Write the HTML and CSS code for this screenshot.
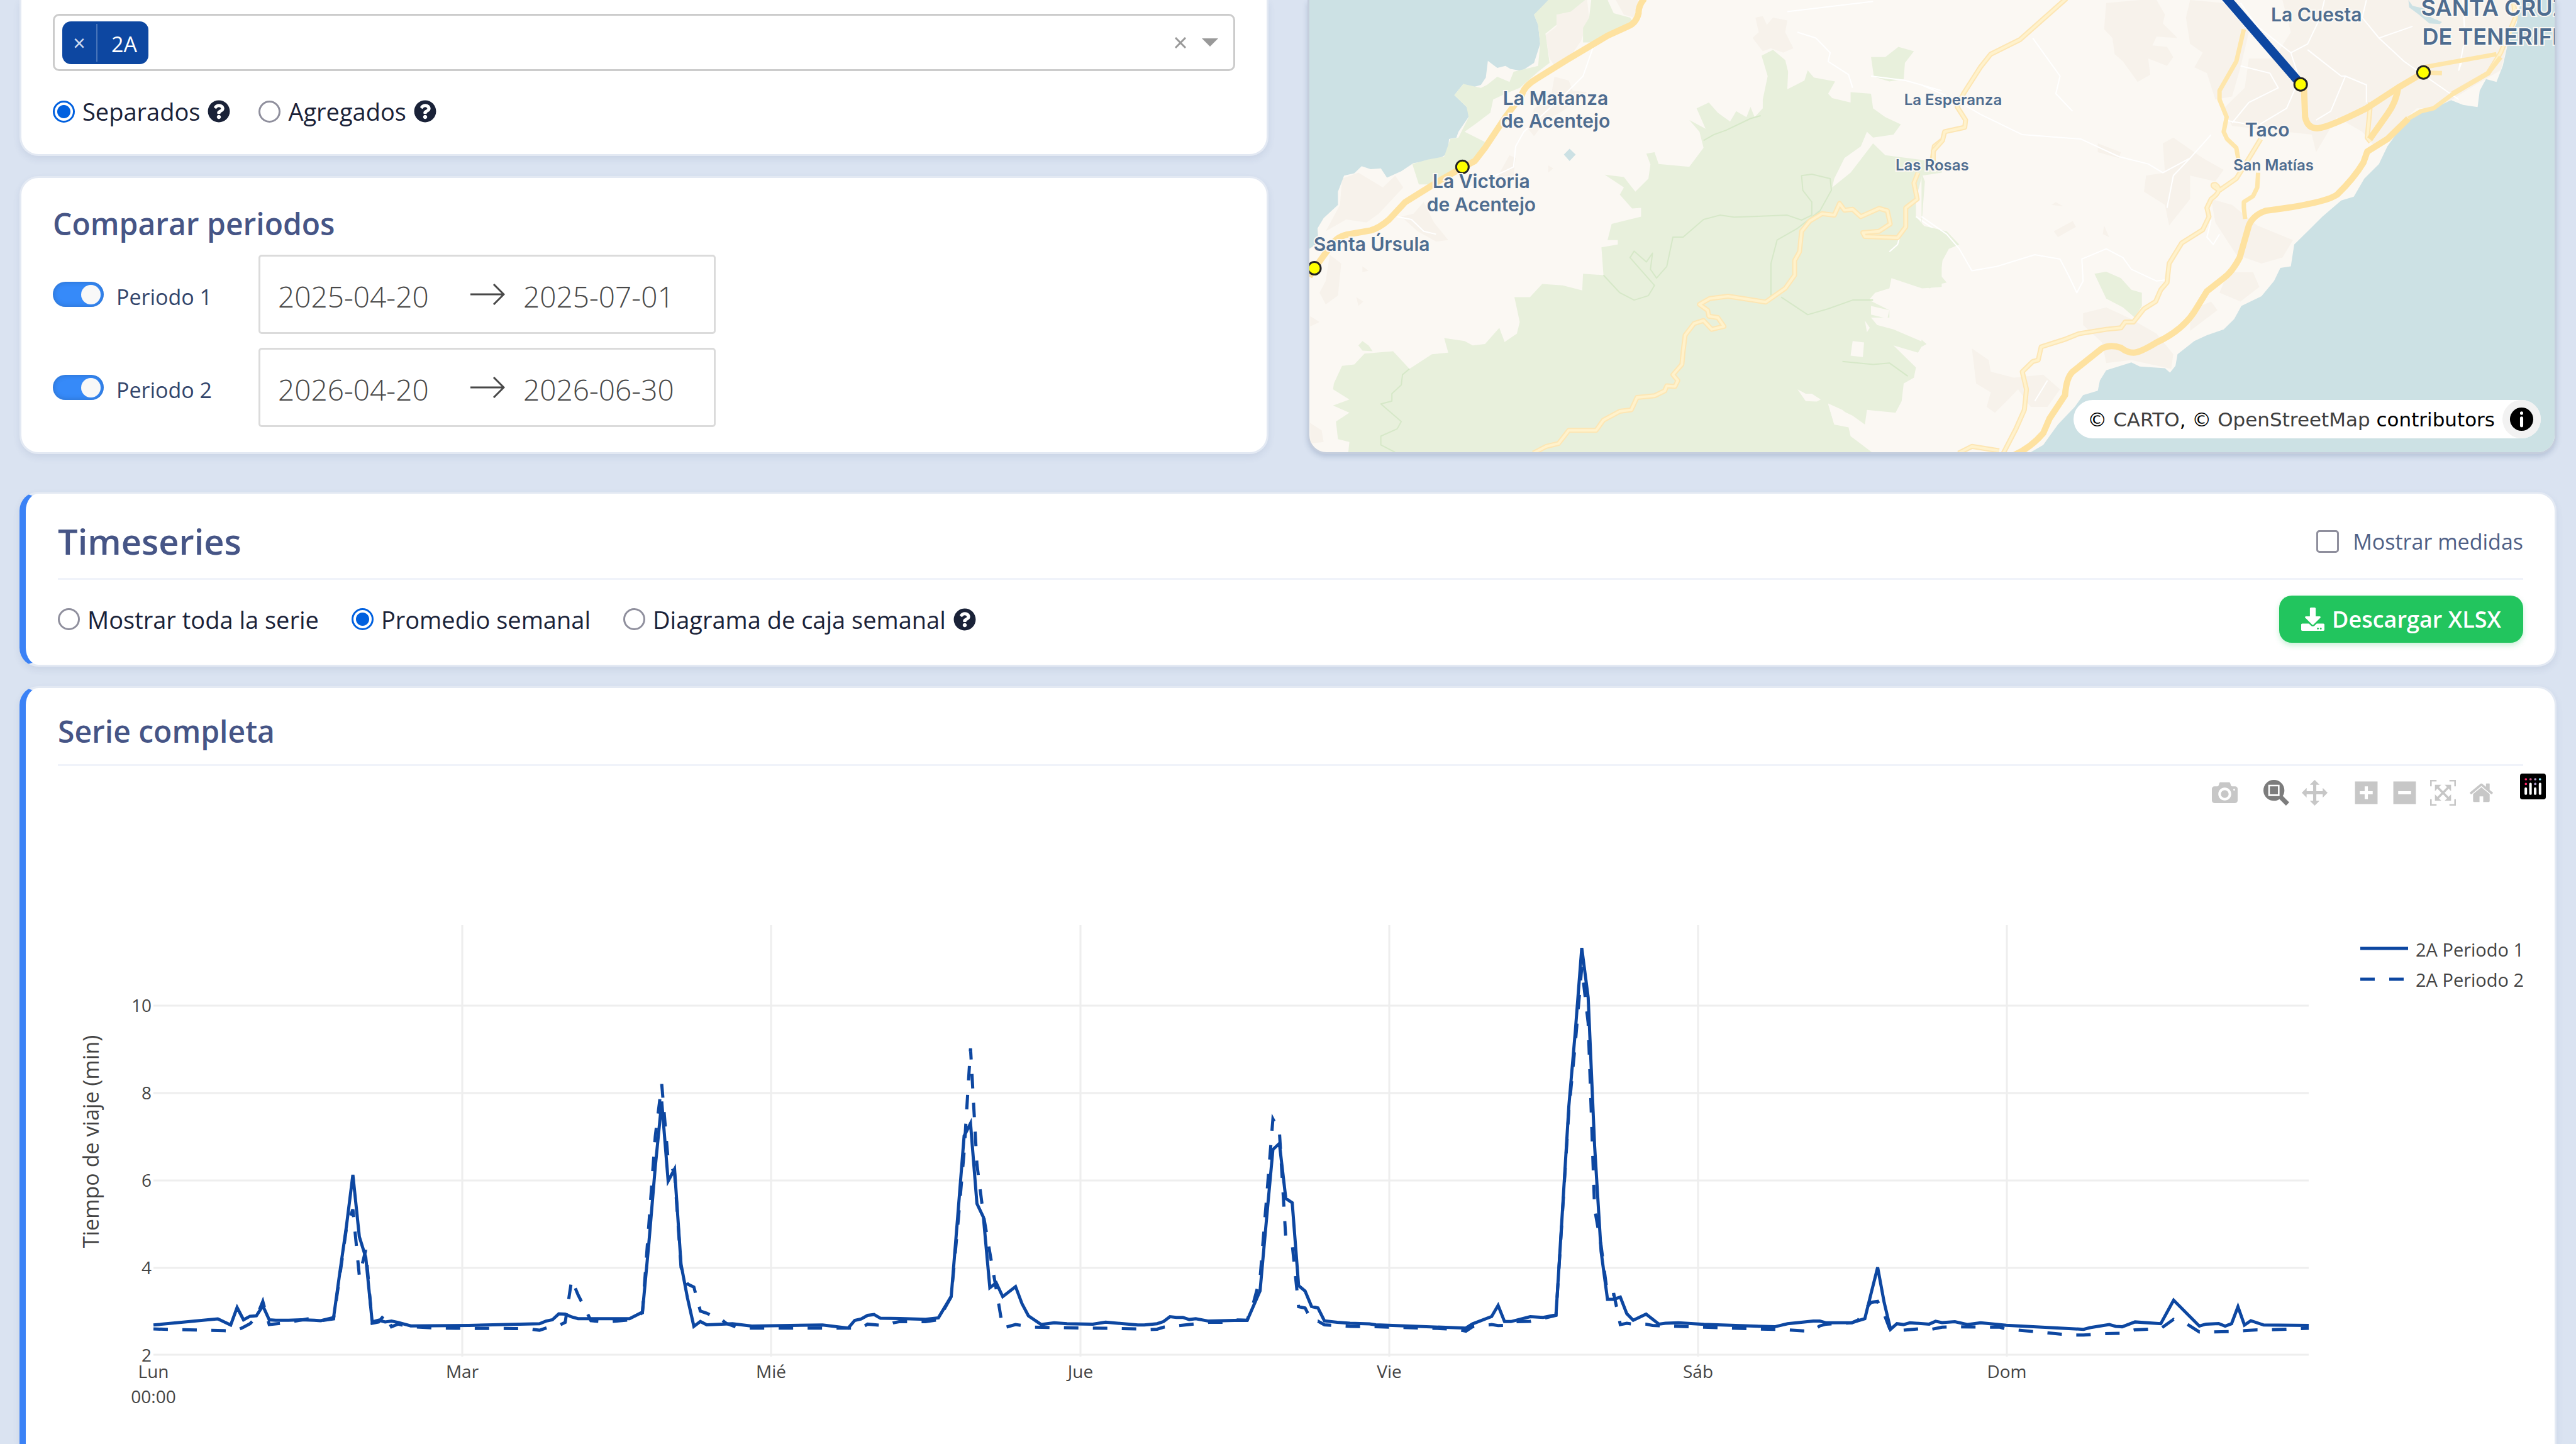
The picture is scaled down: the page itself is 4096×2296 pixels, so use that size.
FILE: index.html
```html
<!DOCTYPE html>
<html lang="es">
<head>
<meta charset="utf-8">
<title>Tiempos de viaje</title>
<link rel="stylesheet" href="styles.css">
</head>
<body>
<svg class="sprite" aria-hidden="true">
  <symbol id="help" viewBox="0 0 512 512"><path d="M504 256c0 137-111 248-248 248S8 393 8 256 119 8 256 8s248 111 248 248zM262.700 90c-54.500 0-89.300 23-116.500 63.800-3.500 5.300-2.400 12.400 2.700 16.300l34.700 26.300c5.200 3.900 12.600 3 16.700-2.100 17.900-22.700 30.100-35.800 57.300-35.800 20.400 0 45.700 13.100 45.700 33 0 15-12.400 22.700-32.500 34C247.100 238.500 216 255 216 296v4c0 6.600 5.400 12 12 12h56c6.600 0 12-5.400 12-12v-1.300c0-28.500 83.200-29.600 83.200-106.700 0-58-60.200-102-116.500-102zM256 338c-25.400 0-46 20.600-46 46s20.600 46 46 46 46-20.600 46-46-20.600-46-46-46z"/></symbol>
</svg>
<main class="page">
  <section class="top">
    <div class="filters">
      <div class="card card-routes">
        <div class="picker">
          <span class="tag"><button type="button" class="tag-remove" aria-label="Quitar 2A">×</button><span class="tag-name">2A</span></span>
          <input class="picker-input" type="text" role="combobox" aria-expanded="false" aria-label="Rutas">
          <button type="button" class="picker-btn" aria-label="Borrar todo"><svg class="picker-clear" viewBox="0 0 18 18"><path d="M1 1L17 17M17 1L1 17"/></svg></button>
          <button type="button" class="picker-btn" aria-label="Abrir lista"><svg class="picker-caret" viewBox="0 0 26 13"><path d="M0 0H26L13 13Z"/></svg></button>
        </div>
        <div class="options options-routes">
          <label class="option"><input class="radio" type="radio" name="modo" checked>Separados<svg class="help"><use href="#help"/></svg></label>
          <label class="option"><input class="radio" type="radio" name="modo">Agregados<svg class="help"><use href="#help"/></svg></label>
        </div>
      </div>
      <div class="card card-periods">
        <h2 class="title">Comparar periodos</h2>
        <div class="period">
          <label class="period-label"><input class="toggle" type="checkbox" checked><span class="period-name">Periodo 1</span></label>
          <div class="range">
            <input class="date" type="text" value="2025-04-20" aria-label="Inicio periodo 1">
            <svg class="arrow" viewBox="0 0 55 34"><path d="M0 17H53M37 1L53 17L37 33"/></svg>
            <input class="date date-end" type="text" value="2025-07-01" aria-label="Fin periodo 1">
          </div>
        </div>
        <div class="period">
          <label class="period-label"><input class="toggle" type="checkbox" checked><span class="period-name">Periodo 2</span></label>
          <div class="range">
            <input class="date" type="text" value="2026-04-20" aria-label="Inicio periodo 2">
            <svg class="arrow" viewBox="0 0 55 34"><path d="M0 17H53M37 1L53 17L37 33"/></svg>
            <input class="date date-end" type="text" value="2026-06-30" aria-label="Fin periodo 2">
          </div>
        </div>
      </div>
    </div>
    <div class="map">
      <svg class="map-canvas" viewBox="2081 0 1983 718" preserveAspectRatio="xMinYMin slice" role="img" aria-label="Mapa de Tenerife">
        <g transform="translate(2068 0) scale(.6486 .4648)">
          <path class="urban" d="M625 0L700 0L705 60L685 140L660 190L640 215L625 235L608 200L598 120L625 90ZM720 0L752 0L742 35ZM770 0L825 0L815 60L790 50ZM1112 60L1130 55L1140 85L1155 60L1190 70L1185 110L1205 165L1180 180L1150 165L1130 175L1105 130L1120 110ZM620 262L655 275L665 310L700 315L640 380L600 410L570 465L555 440L570 370L610 340ZM100 610L140 590L200 640L230 600L250 640L190 730L160 760L110 750L60 790L95 700ZM275 730L300 690L325 760L360 820L330 825L285 790L245 740ZM70 870L98 900L90 1010L60 1040L45 1000L60 960ZM150 910L165 925L150 930ZM510 530L525 540L520 600L480 605ZM605 565L617 575L605 590ZM135 1015L152 1030L140 1045ZM22 1080L45 1100L22 1115ZM22 1445L50 1470L55 1510L22 1515ZM1130 950L1150 965L1135 1010L1105 990Z"/>
          <path class="sea" d="M20 0H605L600 18L570 50L580 85L585 150L570 215L540 242L512 235L500 225L480 232L457 208L452 265L440 290L415 300L397 287L375 325L405 365L412 395L385 450L380 470L362 475L358 525L340 540L300 552L275 557L245 585L210 607L195 575L170 578L148 568L130 592L105 600L90 655L90 700L55 745L40 780L42 830L20 850ZM657 508L672 528L657 550L643 528Z"/>
          <path class="forest" d="M605 0H695L660 40L625 50V85L598 115L608 215L580 245L535 300L500 320L470 340L463 385L430 420L400 450L450 485L425 545L360 590L320 630H288L272 560L310 545L350 535L365 475L385 470L410 400L405 365L375 325L397 287L440 300L455 290L480 262L510 280L520 245L580 225L585 150L580 85L570 50ZM710 0H750L765 45L805 60L815 80L755 110L720 145H690L690 95L705 60Z"/>
          <path class="forest" d="M1127 190L1155 170L1185 205L1192 245L1190 305L1232 275L1240 240L1255 265L1307 278L1290 320L1300 335L1345 350V315L1395 320L1400 370L1430 400L1468 425L1450 460L1400 470L1385 450L1370 500L1330 540L1305 610L1300 640L1345 590L1400 490L1430 530L1568 555V590L1520 600L1505 680V740L1530 780L1568 800V980L1520 985L1445 950L1440 985L1405 1000L1390 1025L1440 1060V1085L1395 1085L1410 1110L1450 1125L1525 1170L1510 1205L1450 1180L1505 1255L1500 1290L1475 1310L1470 1370L1455 1410L1385 1400L1380 1450L1350 1420L1290 1380L1305 1450L1340 1460L1345 1490L1400 1548H115L118 1510L90 1500L85 1440L118 1410L78 1385L118 1365L78 1330L80 1310L100 1250L130 1245L155 1208L225 1200L265 1260L320 1210L360 1205L350 1155L400 1165L420 1180L450 1175L485 1120L498 1168L528 1140L535 1100L522 1015L560 1015L590 970L640 975L688 992L690 935L740 940L735 845L775 835V820L750 820L760 765L832 740V710L810 712L780 665L790 640L743 597L790 605L818 655L850 610L855 562L845 525L865 520L875 560L950 570L985 505L975 450L950 410L990 440L968 370L998 350L1020 385L1050 415L1065 380L1090 400L1100 365L1110 400L1130 370V340L1142 260Z"/>
          <path class="forest" d="M1395 195L1430 195L1462 160L1500 175L1478 215L1475 270L1440 278L1402 262ZM140 1180L150 1165L165 1180L175 1200L150 1198Z"/>
          <path class="land" d="M1215 1330L1235 1345L1250 1345L1272 1365L1262 1372L1235 1370ZM1290 1378L1325 1400L1350 1430L1385 1470L1370 1452L1345 1455L1305 1450ZM1395 1045L1440 1060L1435 1088L1395 1075ZM1380 1095L1392 1120L1385 1135ZM1350 1165L1378 1170L1375 1220L1345 1215Z"/>
          <path class="trail" d="M985 480L1010 460L1040 445L1100 405L1125 395M740 940L780 1000L815 1025L850 1010L865 975L805 880L815 858L845 895L860 865L855 920L870 950L895 910L910 810L935 810L985 750L1025 735L1060 742L1190 735L1225 752L1250 735V690L1228 650L1225 600L1250 595L1295 610L1298 650L1270 720L1215 780L1165 820L1150 900V1010M1175 1015L1240 1075L1290 1055L1350 1025L1400 1025M265 1260L248 1280L245 1315L222 1345V1370L195 1380L245 1440L235 1465L195 1490L195 1520L230 1545M1325 1235L1400 1245L1440 1240L1485 1285"/>
          <path class="lane" d="M715 160L690 260L640 330L545 450L525 500L520 570L400 650M1190 40L1400 5M1215 110L1260 130L1295 180L1290 210L1340 255L1350 300M1395 260L1480 275L1568 310M1505 740L1568 800M1465 810L1460 835L1440 860M235 740L270 750L300 790L330 800"/>
          <path class="minor-edge" d="M568 1548L600 1525L630 1515L655 1470H722L740 1435L780 1405L808 1400L822 1358L865 1352L890 1335L895 1318L915 1320L922 1300L910 1280L932 1245L935 1200L940 1145L962 1105L985 1095L1005 1125L1035 1115L1020 1085L998 1080L995 1060L975 1040L1000 1020L1045 1012L1137 1032L1185 985L1208 940V890L1220 860L1225 790L1245 755L1275 730L1305 735L1318 695L1330 718L1350 715L1370 740L1415 712L1435 720L1442 765L1415 790L1375 795L1380 808L1460 812L1480 775V710L1508 680L1500 625L1510 590M1545 545L1550 500L1568 480"/>
          <path class="minor" d="M568 1548L600 1525L630 1515L655 1470H722L740 1435L780 1405L808 1400L822 1358L865 1352L890 1335L895 1318L915 1320L922 1300L910 1280L932 1245L935 1200L940 1145L962 1105L985 1095L1005 1125L1035 1115L1020 1085L998 1080L995 1060L975 1040L1000 1020L1045 1012L1137 1032L1185 985L1208 940V890L1220 860L1225 790L1245 755L1275 730L1305 735L1318 695L1330 718L1350 715L1370 740L1415 712L1435 720L1442 765L1415 790L1375 795L1380 808L1460 812L1480 775V710L1508 680L1500 625L1510 590M1545 545L1550 500L1568 480"/>
          <path class="major" d="M840 -5Q825 20 826 45Q820 80 800 90L750 122L650 205L575 270Q545 295 540 325L500 400L450 505L425 550L395 572L345 612L255 690L215 750Q190 780 170 787L110 802Q85 810 70 845L33 916L20 945"/>
        </g>
        <g transform="translate(3053 0) scale(.6664 .4648)">
          <path class="urban" d="M440 10L520 0H560L580 50L575 80L610 130L560 125L550 155L585 160L600 195L585 225L540 200L545 255L515 280L500 250L480 210L460 185L455 130L435 100ZM640 0L720 10L780 110L760 230L740 330L700 340L680 250L650 230L670 180L640 150L630 60ZM860 0H1420L1400 130L1380 240L1320 290L1230 370L1180 370L1080 500L1050 450L990 400L940 520L930 460L800 440L740 430L720 370L770 300L780 200L840 200L880 110ZM575 490L600 470L670 540L720 580L700 620L640 600L640 680L590 770L580 700L530 655L535 600L580 590ZM690 680L740 700L800 770L885 820L860 880L810 900L750 870L700 760ZM730 930L790 930L805 980L760 1030L710 1000ZM385 1070L440 1050L500 1090L560 1140L600 1210L595 1260L500 1230L440 1240L430 1170L385 1110ZM120 1190L160 1230L165 1270L220 1290L290 1280L330 1330L300 1390L260 1390L230 1330L210 1360L175 1410L155 1390L165 1340L130 1310ZM315 790L360 755L368 775L325 810ZM435 770L447 810L432 800ZM640 1060L690 1030L705 1060L640 1130ZM320 690L338 705L310 700ZM420 490L475 520L470 540L420 520Z"/>
          <path class="forest" d="M0 590L8 620L0 770L30 780L60 790L90 835L65 850L50 890L45 940L60 965L30 975L20 985L0 975ZM412 935L440 928L475 950L500 990L525 1000V1045L508 1085L480 1050L440 1020ZM0 1160L12 1175L0 1185Z"/>
          <path class="sea" d="M1428 0H1530V1560H242L290 1520L305 1490L325 1450L365 1390L385 1350L420 1335L425 1300L440 1265L500 1238L520 1252L580 1258L592 1273L605 1250L610 1210L650 1165L680 1145L720 1125L745 1090L762 1045L810 1012L840 960L855 915L880 910L888 835L920 790L955 740L1000 685L1030 672L1055 610L1090 560L1110 500L1150 420L1180 380L1220 370L1262 342L1290 358L1325 366L1330 310L1345 270L1370 280L1385 225L1400 130L1418 80ZM1160 0L1162 25L1185 50L1210 80L1235 82L1240 75L1215 60L1200 30L1170 20Z"/>
          <path class="lane" d="M265 130L300 200L330 260L320 320L360 380M0 290L80 340L140 390L240 460L380 475L470 535L540 560L575 590L640 540L690 460M0 740L60 800L90 850L120 925L180 910L270 870L330 885L350 940L370 1000L385 960L382 885L440 850L480 880L500 920L560 960L590 955M760 10L800 90L880 180L920 150L950 60L960 0M880 180L900 270L870 370L800 430L720 410M760 225L830 250L850 300L780 350L740 420M920 170L1000 260L1010 260L975 380L940 410M1010 260L1060 290L1060 350M1060 0L1050 60L1090 130L1150 210L1280 340M1090 130L1170 90M1290 0L1295 130L1280 240L1290 200M640 540L600 600L585 710M690 750L680 810L695 835L710 800M270 1370L300 1300"/>
          <path class="minor-edge" d="M345 -5L235 135L165 185L140 230L100 320L85 365L105 410L103 435L55 450L50 480L28 515V550M808 475L770 565L750 610L710 650Q685 630 700 630Q720 650 690 680L680 710L685 740L670 785L620 830L590 900L585 965L570 990L558 1030L530 1055L505 1100H485L475 1120L440 1125L375 1140L340 1160L285 1185L278 1230L265 1235L240 1270L250 1330L245 1400L225 1465L195 1548M88 1548L120 1525L185 1540M1410 0L1415 60L1380 180L1350 250L1265 320M1070 350L1062 470L1070 485"/>
          <path class="minor" d="M345 -5L235 135L165 185L140 230L100 320L85 365L105 410L103 435L55 450L50 480L28 515V550M808 475L770 565L750 610L710 650Q685 630 700 630Q720 650 690 680L680 710L685 740L670 785L620 830L590 900L585 965L570 990L558 1030L530 1055L505 1100H485L475 1120L440 1125L375 1140L340 1160L285 1185L278 1230L265 1235L240 1270L250 1330L245 1400L225 1465L195 1548M88 1548L120 1525L185 1540M1410 0L1415 60L1380 180L1350 250L1265 320M1070 350L1062 470L1070 485"/>
          <path class="medium" d="M768 100L750 210L710 310V340L727 400L720 450L728 475L750 505L755 545M802 590L800 640L790 670L768 690V710L771 748M1240 250L1196 248M1196 230L1370 185M1380 195L1350 250L1262 325L1220 370L1190 380L1160 405"/>
          <path class="major" d="M911 290L914 400Q920 440 945 438Q970 435 1060 370L1135 300L1196 248M1135 305Q1130 350 1110 390L1068 475M1160 405L1110 475L1062 518L1053 555Q1030 610 990 665Q960 695 820 720Q790 735 780 770L758 880Q740 930 720 950L680 995L650 1065Q620 1130 560 1170Q520 1205 505 1205Q490 1205 475 1188Q450 1175 430 1190L360 1270Q345 1290 342 1350L305 1430L290 1480Q260 1530 220 1555"/>
          <path class="route" d="M712 -30L904 288"/>
        </g>
        <g class="stops">
          <circle cx="2324" cy="265" r="10"/><circle cx="2089" cy="426" r="10"/>
          <circle cx="3655" cy="134" r="10"/><circle cx="3850" cy="115" r="10"/>
        </g>
        <g class="towns">
          <text x="2472" y="167">La Matanza</text><text x="2472" y="203">de Acentejo</text>
          <text x="2354" y="299">La Victoria</text><text x="2354" y="336">de Acentejo</text>
          <text x="2180" y="398">Santa Úrsula</text>
          <text x="3680" y="34">La Cuesta</text><text x="3602" y="217">Taco</text>
          <g class="hamlets"><text x="3103" y="167">La Esperanza</text><text x="3070" y="271">Las Rosas</text><text x="3612" y="271">San Matías</text></g>
          <g class="city"><text x="3846" y="25">SANTA CRUZ</text><text x="3848" y="71">DE TENERIFE</text></g>
        </g>
      </svg>
      <div class="credits">
        <span>© <a href="#carto">CARTO</a>, © <a href="#osm">OpenStreetMap</a> contributors</span>
        <button type="button" class="credits-btn" aria-label="Información"><svg viewBox="0 0 24 24"><circle cx="12" cy="12" r="7.300"/><path class="info-i" d="M12 11.300V16M12 8.200V8.300"/></svg></button>
      </div>
    </div>
  </section>

  <section class="card card-accent">
    <header class="card-head">
      <h1 class="title title-big">Timeseries</h1>
      <label class="measures"><input class="check" type="checkbox">Mostrar medidas</label>
    </header>
    <div class="controls">
      <div class="options">
        <label class="option"><input class="radio" type="radio" name="serie">Mostrar toda la serie</label>
        <label class="option"><input class="radio" type="radio" name="serie" checked>Promedio semanal</label>
        <label class="option"><input class="radio" type="radio" name="serie">Diagrama de caja semanal<svg class="help"><use href="#help"/></svg></label>
      </div>
      <button type="button" class="download"><svg class="download-icon" viewBox="0 0 512 512"><path d="M216 0h80c13.300 0 24 10.700 24 24v168h87.700c17.800 0 26.700 21.500 14.100 34.100L269.700 378.300c-7.500 7.500-19.800 7.500-27.300 0L90.100 226.100c-12.600-12.600-3.700-34.100 14.100-34.100H192V24c0-13.300 10.700-24 24-24zm296 376v112c0 13.300-10.700 24-24 24H24c-13.300 0-24-10.700-24-24V376c0-13.300 10.700-24 24-24h146.700l49 49c20.100 20.100 52.500 20.100 72.600 0l49-49H488c13.300 0 24 10.700 24 24zm-124 88c0-11-9-20-20-20s-20 9-20 20 9 20 20 20 20-9 20-20zm64 0c0-11-9-20-20-20s-20 9-20 20 9 20 20 20 20-9 20-20z"/></svg>Descargar XLSX</button>
    </div>
  </section>

  <section class="card card-accent card-chart">
    <header class="card-head"><h2 class="title">Serie completa</h2></header>
    <div class="modebar">
      <button type="button" class="mode" aria-label="Descargar imagen"><svg viewBox="0 0 1000 1000"><path transform="matrix(1 0 0 -1 0 850)" d="m500 450c-83 0-150-67-150-150 0-83 67-150 150-150 83 0 150 67 150 150 0 83-67 150-150 150z m400 150h-120c-16 0-34 13-39 29l-31 93c-6 15-23 28-40 28h-340c-16 0-34-13-39-28l-31-94c-6-15-23-28-40-28h-120c-55 0-100-45-100-100v-450c0-55 45-100 100-100h800c55 0 100 45 100 100v450c0 55-45 100-100 100z m-400-550c-138 0-250 112-250 250 0 138 112 250 250 250 138 0 250-112 250-250 0-138-112-250-250-250z m365 380c-19 0-35 16-35 35 0 19 16 35 35 35 19 0 35-16 35-35 0-19-16-35-35-35z"/></svg></button>
      <div class="mode-group">
        <button type="button" class="mode mode-on" aria-label="Zoom"><svg viewBox="0 0 1000 1000"><path transform="matrix(1 0 0 -1 0 850)" d="m1000-25l-250 251c40 63 63 138 63 218 0 224-182 406-407 406-224 0-406-182-406-406s183-406 407-406c80 0 155 22 218 62l250-250 125 125z m-812 250l0 438 437 0 0-438-437 0z m62 375l313 0 0-312-313 0 0 312z"/></svg></button>
        <button type="button" class="mode" aria-label="Desplazar"><svg viewBox="0 0 1000 1000"><path transform="matrix(1 0 0 -1 0 850)" d="m1000 350l-187 188 0-125-250 0 0 250 125 0-188 187-187-187 125 0 0-250-250 0 0 125-188-188 186-187 0 125 252 0 0-250-125 0 187-188 188 188-125 0 0 250 250 0 0-126 187 188z"/></svg></button>
      </div>
      <div class="mode-group">
        <button type="button" class="mode" aria-label="Acercar"><svg viewBox="-62 0 1000 1000"><path transform="matrix(1 0 0 -1 0 850)" d="m1 787l0-875 875 0 0 875-875 0z m687-500l-187 0 0-187-125 0 0 187-188 0 0 125 188 0 0 187 125 0 0-187 187 0 0-125z"/></svg></button>
        <button type="button" class="mode" aria-label="Alejar"><svg viewBox="-62 0 1000 1000"><path transform="matrix(1 0 0 -1 0 850)" d="m0 788l0-876 875 0 0 876-875 0z m688-500l-500 0 0 125 500 0 0-125z"/></svg></button>
        <button type="button" class="mode" aria-label="Autoescala"><svg viewBox="0 0 1000 1000"><path transform="matrix(1 0 0 -1 0 850)" d="m250 850l-187 0-63 0 0-62 0-188 63 0 0 188 187 0 0 62z m688 0l-188 0 0-62 188 0 0-188 62 0 0 188 0 62-62 0z m-875-938l0 188-63 0 0-188 0-62 63 0 187 0 0 62-187 0z m875 188l0-188-188 0 0-62 188 0 62 0 0 62 0 188-62 0z m-125 188l-1 0-93-94-156 156 156 156 92-93 2 0 0 250-250 0 0-2 93-92-156-156-156 156 94 92 0 2-250 0 0-250 0 0 93 93 157-156-157-156-93 94 0 0 0-250 250 0 0 0-94 93 156 157 156-157-93-93 0 0 250 0 0 250z"/></svg></button>
        <button type="button" class="mode" aria-label="Restablecer"><svg viewBox="-36 0 1000 1000"><path transform="matrix(1 0 0 -1 0 850)" d="m786 296v-267q0-15-11-26t-25-10h-214v214h-143v-214h-214q-15 0-25 10t-11 26v267q0 1 0 2t0 2l321 264 321-264q1-1 1-4z m124 39l-34-41q-5-5-12-6h-2q-7 0-12 3l-386 322-386-322q-7-4-13-4-7 2-12 7l-35 41q-4 5-3 13t6 12l401 334q18 15 42 15t43-15l136-114v109q0 8 5 13t13 5h107q8 0 13-5t5-13v-227l122-102q5-5 6-12t-4-13z"/></svg></button>
      </div>
      <a class="mode mode-logo" href="#plotly" aria-label="Plotly"><svg viewBox="0 0 132 132"><rect width="132" height="132" rx="12"/><g fill="#fff"><rect x="23" y="71" width="13" height="38" rx="6"/><rect x="47" y="47" width="13" height="62" rx="6"/><rect x="71" y="71" width="13" height="38" rx="6"/><rect x="96" y="47" width="13" height="62" rx="6"/></g><g fill="#f26"><circle cx="30" cy="29" r="6"/><circle cx="30" cy="53" r="6"/></g><circle cx="54" cy="29" r="6" fill="#d25a8c"/><g fill="#b4a0d2"><circle cx="78" cy="29" r="6"/><circle cx="78" cy="53" r="6"/></g><circle cx="102" cy="29" r="6" fill="#8cf0ff"/></svg></a>
    </div>
    <svg class="chart" viewBox="92 1282 3920 1000" role="img" aria-label="Tiempo de viaje en minutos">
      <path class="grid" d="M244 1600H3671M244 1739H3671M244 1878H3671M244 2017H3671M244 2155H3671M735 1472V2158M1226 1472V2158M1718 1472V2158M2209 1472V2158M2700 1472V2158M3191 1472V2158"/>
      <path class="series" id="p1"/>
      <path class="series dashed" id="p2"/>
      <g class="tick tick-y"><text x="241" y="1610">10</text><text x="241" y="1749">8</text><text x="241" y="1888">6</text><text x="241" y="2027">4</text><text x="241" y="2166">2</text></g>
      <g class="tick tick-x"><text x="244" y="2192">Lun</text><text x="244" y="2232">00:00</text><text x="735" y="2192">Mar</text><text x="1226" y="2192">Mié</text><text x="1718" y="2192">Jue</text><text x="2209" y="2192">Vie</text><text x="2700" y="2192">Sáb</text><text x="3191" y="2192">Dom</text></g>
      <text class="axis-title" transform="translate(157 1816) rotate(-90)">Tiempo de viaje (min)</text>
      <path class="series" d="M3753 1509H3829"/><path class="series dashed" d="M3753 1558H3829"/>
      <g class="tick legend"><text x="3841" y="1522">2A Periodo 1</text><text x="3841" y="1570">2A Periodo 2</text></g>
    </svg>
  </section>
</main>
<script src="chart.js"></script>
</body>
</html>
```
FILE: styles.css
```css
* { box-sizing: border-box; }
body { margin: 0; background: #dae3f1; color: #1a2238; font-family: "Open Sans", "Noto Sans", sans-serif; font-size: 38px; line-height: 60px; }
button, input { font: inherit; color: inherit; margin: 0; padding: 0; border: 0; background: none; outline: 0; }
svg { display: block; }
.sprite { position: absolute; width: 0; height: 0; }
.page { display: flex; flex-direction: column; min-height: 100vh; padding: 0 31px; }
.top { display: grid; grid-template-columns: 1fr 1fr; gap: 62px; margin-bottom: 60px; }
.filters { display: flex; flex-direction: column; gap: 32px; }

.card { background: #fff; border: 3px solid #e3e9f3; border-radius: 30px; box-shadow: 0 5px 12px rgba(40, 70, 120, .09); }
.card-routes { padding: 22px 50px 38px; border-top: 0; border-radius: 0 0 30px 30px; }
.card-periods { padding: 43px 50px 40px; }
.card-accent { border-left: 10px solid #3b82f6; padding: 39px 50px 35px 51px; }
.card-chart { flex: 1; margin-top: 31px; padding-bottom: 0; border-bottom: 0; border-radius: 30px 30px 0 0; }
.title { margin: 0; color: #465586; font-size: 48px; font-weight: 600; line-height: 60px; }
.title-big { font-size: 56px; line-height: 73px; }
.card-head { display: flex; justify-content: space-between; align-items: center; padding-bottom: 22px; border-bottom: 3px solid #f0f3fa; }

.picker { display: flex; align-items: center; height: 91px; padding: 0 24px 0 12px; border: 3px solid #ccc; border-radius: 10px; }
.tag { display: flex; align-items: center; width: 137px; height: 68px; border-radius: 14px; background: #0d47a1; color: #fff; font-size: 34px; }
.tag-remove { width: 56px; height: 60px; border-right: 2px solid #4a76ba; color: #cfdcf0; line-height: 60px; }
.tag-name { flex: 1; padding: 4px 0 0 4px; text-align: center; }
.picker-input { flex: 1; min-width: 0; }
.picker-btn { margin-left: 25px; }
.picker-clear { width: 18px; height: 18px; fill: none; stroke: #999; stroke-width: 3; }
.picker-caret { width: 26px; height: 13px; fill: #999; }

.options { display: flex; gap: 52px; }
.options-routes { gap: 45px; margin-top: 34px; }
.option { display: flex; align-items: center; gap: 12px; }
.radio { appearance: none; width: 35px; height: 35px; border: 3px solid #8f8f9d; border-radius: 50%; background: #fff; }
.radio:checked { border-color: #0060df; background: radial-gradient(circle, #0060df 10px, #fff 11px); }
.help { width: 36px; height: 36px; fill: #1a2238; }

.period { display: flex; align-items: center; margin-top: 22px; }
.title + .period { margin-top: 19px; }
.period-label { display: flex; align-items: center; gap: 20px; width: 327px; color: #33456b; font-size: 34px; }
.period-name { padding-top: 8px; }
.toggle { appearance: none; display: flex; align-items: center; justify-content: flex-end; width: 81px; height: 40px; padding-right: 5px; border-radius: 20px; background: #368af9; box-shadow: inset 0 0 10px rgba(0, 0, 0, .2); }
.toggle::before { content: ""; width: 31px; height: 31px; border-radius: 50%; background: #f8f8f8; }
.range { display: flex; align-items: center; width: 727px; height: 126px; padding-left: 28px; border: 3px solid #dbdbdb; border-radius: 5px; background: #fff; }
.date { width: 306px; padding-top: 6px; color: #484848; font-size: 46px; font-weight: 300; }
.date-end { width: 270px; margin-left: 29px; }
.arrow { width: 55px; height: 34px; fill: none; stroke: #484848; stroke-width: 3; }

.map { position: relative; overflow: hidden; border: 3px solid #c5cedd; border-top: 0; border-radius: 0 0 30px 30px; background: #fbf8f3; box-shadow: 0 4px 8px rgba(40, 70, 120, .2); }
.map-canvas { position: absolute; inset: 0; width: 100%; height: 100%; }
.map-canvas path { vector-effect: non-scaling-stroke; stroke-linejoin: round; }
.land { fill: #fbf8f3; }
.sea { fill: #cce1e4; }
.forest { fill: #e8f0dc; }
.urban { fill: #f7f2eb; }
.trail { fill: none; stroke: #d6e8c8; stroke-width: 2; }
.lane { fill: none; stroke: #fff; stroke-width: 2; }
.minor-edge { fill: none; stroke: #fde6b4; stroke-width: 8; }
.minor { fill: none; stroke: #fff2cc; stroke-width: 4; }
.medium { fill: none; stroke: #fee6ab; stroke-width: 7; }
.major { fill: none; stroke: #fee2a0; stroke-width: 10; }
.route { fill: none; stroke: #0d47a1; stroke-width: 14; }
.stops { fill: #ff0; stroke: #222; stroke-width: 3; }
.towns { fill: #4f6d90; stroke: #fbf8f3; stroke-width: 4; paint-order: stroke; font-family: Inter, sans-serif; font-size: 30px; font-weight: 600; text-anchor: middle; }
.hamlets { font-size: 24px; }
.city { font-size: 36px; text-anchor: start; }
.credits { position: absolute; right: 22px; bottom: 22px; display: flex; align-items: center; gap: 12px; height: 61px; padding-left: 22px; border-radius: 31px; background: #fff; color: #000; font-family: "DejaVu Sans", sans-serif; font-size: 31px; white-space: nowrap; }
.credits a { color: #404040; text-decoration: none; }
.credits-btn { width: 61px; height: 61px; border-radius: 50%; background: #f2f2f2; }
.info-i { stroke: #fff; stroke-width: 2; stroke-linecap: round; }

.measures { display: flex; align-items: center; gap: 22px; color: #4f5f86; font-size: 34px; }
.check { appearance: none; width: 36px; height: 36px; border: 3px solid #8f8f9d; border-radius: 5px; }
.controls { display: flex; justify-content: space-between; align-items: center; margin-top: 25px; }
.download { display: flex; align-items: center; justify-content: center; gap: 12px; width: 388px; height: 75px; border-radius: 20px; background: #22c55e; box-shadow: 0 4px 8px rgba(34, 197, 94, .25); color: #fff; font-size: 36px; font-weight: 600; }
.download-icon { width: 37px; height: 37px; fill: #fff; }

.modebar { display: flex; justify-content: flex-end; gap: 41px; margin: 12px -36px 0 0; }
.mode-group { display: flex; gap: 20px; }
.mode { width: 41px; height: 41px; margin-top: 10px; fill: #c7c7c7; }
.mode-on { fill: #7c7c7c; }
.mode-logo { margin-top: 0; fill: #000; }
.chart { width: 100%; }
.grid { fill: none; stroke: #eee; stroke-width: 3; }
.series { fill: none; stroke: #0d47a1; stroke-width: 5; }
.dashed { stroke-dasharray: 23 23; }
.tick, .axis-title { fill: #444; font-size: 28px; }
.tick-y { text-anchor: end; }
.tick-x { text-anchor: middle; }
.legend { font-size: 29px; }
.axis-title { font-size: 34px; text-anchor: middle; }
```
FILE: chart.js
```js
// Weekly averages: half-hour slot of the week, minutes of travel.
const periods = {
  p1: [0,2.68,10,2.82,12,2.68,13,3.08,14,2.8,15,2.88,16,2.89,17,3.12,18,2.8,19,2.79,21,2.79,23,2.8,25,2.79,26,2.78,28,2.85,29,3.92,30,4.95,31,6.12,32,4.7,33,4.23,34,2.75,35,2.79,36,2.75,37,2.77,38,2.74,40,2.66,49,2.67,60,2.71,61,2.77,62,2.8,63,2.935,64,2.93,65,2.865,66,2.825,74,2.825,76,2.975,77,4.55,78,6.3,79,7.8,80,5.98,81,6.25,82,4.07,83,3.3,84,2.65,85,2.76,86,2.685,90,2.71,93,2.655,104,2.68,108,2.61,109,2.785,110,2.82,111,2.9,112,2.92,113,2.835,116,2.83,120,2.81,122,2.845,124,3.335,125,5.16,126,7.01,127,7.3,128,5.46,129,5.15,130,3.535,131,3.645,132,3.33,134,3.56,135,3.17,136,2.89,138,2.69,140,2.73,142,2.71,146,2.7,148,2.745,153,2.68,154,2.68,156,2.71,157,2.76,158,2.87,159,2.855,160,2.855,161,2.805,162,2.825,164,2.77,169,2.79,170,2.785,172,3.465,173,5.1,174,6.7,175,6.84,176,5.58,177,5.48,178,3.58,179,3.46,180,3.105,181,3.07,182,2.775,184,2.74,186,2.72,189,2.705,190,2.685,204,2.61,205,2.705,208,2.875,209,3.13,210,2.76,211,2.76,214,2.87,216,2.855,218,2.91,219,5.3,220,7.7,221,9.4,222,11.32,223,10.18,224,6.79,225,4.37,226,3.27,227,3.27,228,3.32,229,2.94,230,2.79,232,2.93,234,2.7,235,2.72,237,2.73,241,2.695,252,2.64,254,2.71,258,2.77,259,2.77,260,2.73,264,2.735,266,2.825,267,3.42,268,4,269,3.2,270,2.58,271,2.71,272,2.69,273,2.73,276,2.7,277,2.765,278,2.735,280,2.755,282,2.69,284,2.73,288,2.675,300,2.58,301,2.62,304,2.69,305,2.65,306,2.64,308,2.75,312,2.71,314,3.25,316,2.95,318,2.655,319,2.7,321,2.715,322,2.655,323,2.71,324,3.1,325,2.68,326,2.78,328,2.68,335,2.67],
  p2: [0,2.59,11,2.55,12,2.545,13,2.56,14,2.63,15,2.71,16,2.86,17,3.22,18,2.69,20,2.72,24,2.82,26,2.78,28,2.82,29,3.85,30,4.9,31,5.33,32,3.8,33,4.4,34,2.72,35,2.75,36,2.93,37,2.64,38,2.7,40,2.64,44,2.61,47,2.605,56,2.6,58,2.6,60,2.56,62,2.66,63,2.67,64,2.74,65,3.72,66,3.37,67,3.08,68,2.78,70,2.75,72,2.77,74,2.8,76,2.96,77,4.98,78,7,79,8.2,80,6.45,81,6.16,82,4,83,3.62,84,3.55,85,3,86,2.95,87,2.88,88,2.84,89,2.72,91,2.61,110,2.61,111,2.7,113,2.675,114,2.675,115,2.73,116,2.76,120,2.755,122,2.8,124,3.33,125,4.94,126,6.65,127,9.02,128,6.36,129,5.2,130,4.34,131,3.5,132,2.61,134,2.69,137,2.63,150,2.6,153,2.59,154,2.57,156,2.585,157,2.63,158,2.645,161,2.69,164,2.74,166,2.74,168,2.8,170,2.79,171,3.2,172,3.75,173,5.56,174,7.4,175,7.12,176,4.67,177,4.53,178,3.1,179,3.07,180,2.78,181,2.77,182,2.685,186,2.65,190,2.64,200,2.6,203,2.57,204,2.54,205,2.64,208,2.69,209,2.665,210,2.67,211,2.75,214,2.765,216,2.83,218,2.9,219,5.25,220,7.6,221,9.13,222,10.88,223,9.6,224,5.35,225,4.5,226,3.37,227,3.38,228,2.69,229,2.72,230,2.7,232,2.7,233,2.67,235,2.66,241,2.63,245,2.61,254,2.57,257,2.54,258,2.56,259,2.66,260,2.7,264,2.73,265,2.8,266,3.04,267,3.2,268,3.22,269,2.93,270,2.545,271,2.54,272,2.56,275,2.6,276,2.57,278,2.63,280,2.64,287,2.63,288,2.59,298,2.45,300,2.45,303,2.48,306,2.49,308,2.57,310,2.585,312,2.6,314,2.81,316,2.71,318,2.52,319,2.535,320,2.52,323,2.53,325,2.55,327,2.57,329,2.57,335,2.605]
};
for (const [id, data] of Object.entries(periods)) {
  let d = '';
  for (let i = 0; i < data.length; i += 2) {
    d += (i ? 'L' : 'M') + (244 + data[i] * 10.23).toFixed(1) + ' ' + (2155 - (data[i + 1] - 2) * 69.4).toFixed(1);
  }
  document.getElementById(id).setAttribute('d', d);
}
```
